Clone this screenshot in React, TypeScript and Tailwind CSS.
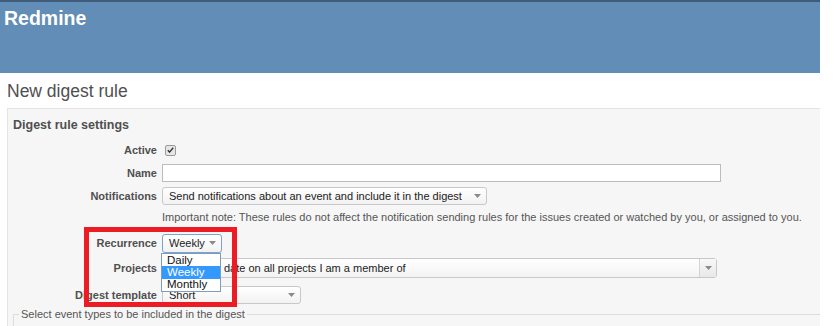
import React from 'react';

const Arrow: React.FC = () => (
    <svg width="7" height="4" viewBox="0 0 7 4" className="shrink-0">
        <path d="M0 0h7L3.5 4z" fill="#8a8a8a" />
    </svg>
);

interface SelectBoxProps {
    value: string;
    className: string;
    focused?: boolean;
}

const SelectBox: React.FC<SelectBoxProps> = ({ value, className, focused }) => (
    <div
        className={`flex items-center justify-between rounded-[3px] border bg-gradient-to-b from-white to-[#f2f2f2] pl-[6px] pr-[5px] text-[11px] leading-[12px] text-[#222] ${
            focused ? 'border-[#7da2ce]' : 'border-[#c8c8c8]'
        } ${className}`}
    >
        <span className="whitespace-nowrap">{value}</span>
        <Arrow />
    </div>
);

const Label: React.FC<{ children: React.ReactNode }> = ({ children }) => (
    <div className="w-[150px] shrink-0 pr-[1px] text-right text-[11px] font-bold text-[#505050]">{children}</div>
);

const options = ['Daily', 'Weekly', 'Monthly'];

const App: React.FC = () => {
    return (
        <div className="relative h-[326px] w-[837px] overflow-hidden bg-white font-['Liberation_Sans',sans-serif] text-[#484848]">
            <div className="w-[820px]">
                <header className="h-[73px] border-t-2 border-[#3f5d7a] bg-[#628db6] pl-[4px] pt-[4px]">
                    <h1 className="text-[19.5px] font-bold leading-[24px] text-white">Redmine</h1>
                </header>

                <div className="h-[35px] pl-[7px] pt-[8px]">
                    <h2 className="text-[17.5px] leading-[20px] text-[#505050]">New digest rule</h2>
                </div>

                <div className="ml-[7px] h-[218px] border-t border-l border-[#e4e4e4] bg-[#f6f6f6] pt-[8px]">
                    <div className="pl-[5px] text-[12.5px] font-bold leading-[16px] text-[#505050]">Digest rule settings</div>

                    <div className="mt-[8px] flex h-[18px] items-center gap-[4px]">
                        <Label>Active</Label>
                        <div className="ml-[3px] flex h-[11px] w-[11px] items-center justify-center rounded-[2px] border border-[#9a9a9a] bg-[#e6e6e6]">
                            <svg width="7" height="6" viewBox="0 0 7 6">
                                <path d="M0.8 3.2l1.8 1.9L6.2 0.8" stroke="#333" strokeWidth="1.4" fill="none" />
                            </svg>
                        </div>
                    </div>

                    <div className="mt-[5px] flex h-[18px] items-center gap-[4px]">
                        <Label>Name</Label>
                        <div className="h-[18px] w-[559px] border border-[#bcbcbc] bg-white" />
                    </div>

                    <div className="mt-[5px] flex h-[18px] items-center gap-[4px]">
                        <Label>Notifications</Label>
                        <SelectBox
                            value="Send notifications about an event and include it in the digest"
                            className="h-[18px] w-[325px]"
                        />
                    </div>

                    <div className="mt-[5px] flex h-[14px] items-center pl-[154px] text-[11px] whitespace-nowrap text-[#555]">
                        Important note: These rules do not affect the notification sending rules for the issues created or watched by you, or assigned to you.
                    </div>

                    <div className="mt-[10px] flex h-[18px] items-center gap-[4px]">
                        <Label>Recurrence</Label>
                        <SelectBox value="Weekly" className="h-[19px] w-[60px]" focused />
                    </div>

                    <div className="mt-[6px] flex h-[20px] items-center gap-[4px]">
                        <Label>Projects</Label>
                        <div className="flex h-[20px] w-[555px] items-stretch rounded-[3px] border border-[#c8c8c8] bg-gradient-to-b from-white to-[#f3f3f3] text-[11px] text-[#222]">
                            <span className="flex flex-1 items-center pl-[61px] whitespace-nowrap">
                                date on all projects I am a member of
                            </span>
                            <span className="flex w-[17px] items-center justify-center border-l border-[#d4d4d4] bg-gradient-to-b from-[#f8f8f8] to-[#e8e8e8]">
                                <Arrow />
                            </span>
                        </div>
                    </div>

                    <div className="mt-[8px] flex h-[18px] items-center gap-[4px]">
                        <Label>Digest template</Label>
                        <SelectBox value="Short" className="h-[18px] w-[139px]" />
                    </div>

                    <fieldset className="mt-[2px] ml-[5px] h-[40px] border-t border-l border-[#dcdcdc] pl-[5px]">
                        <legend className="px-[2px] text-[11px] text-[#555]">Select event types to be included in the digest</legend>
                    </fieldset>
                </div>
            </div>

            {/* open recurrence dropdown */}
            <div className="absolute top-[253px] left-[161px] w-[60px] border border-[#7f9db9] bg-white text-[11.5px] text-[#111]">
                {options.map((o) => (
                    <div
                        key={o}
                        className={`flex h-[12.3px] items-center pl-[5px] leading-[11px] ${o === 'Weekly' ? 'bg-[#3399ff] text-white' : ''}`}
                    >
                        {o}
                    </div>
                ))}
            </div>

            {/* annotation */}
            <div className="pointer-events-none absolute top-[227px] left-[84px] h-[80px] w-[153px] border-[5px] border-[#ec1c24]" />
        </div>
    );
};

export default App;
